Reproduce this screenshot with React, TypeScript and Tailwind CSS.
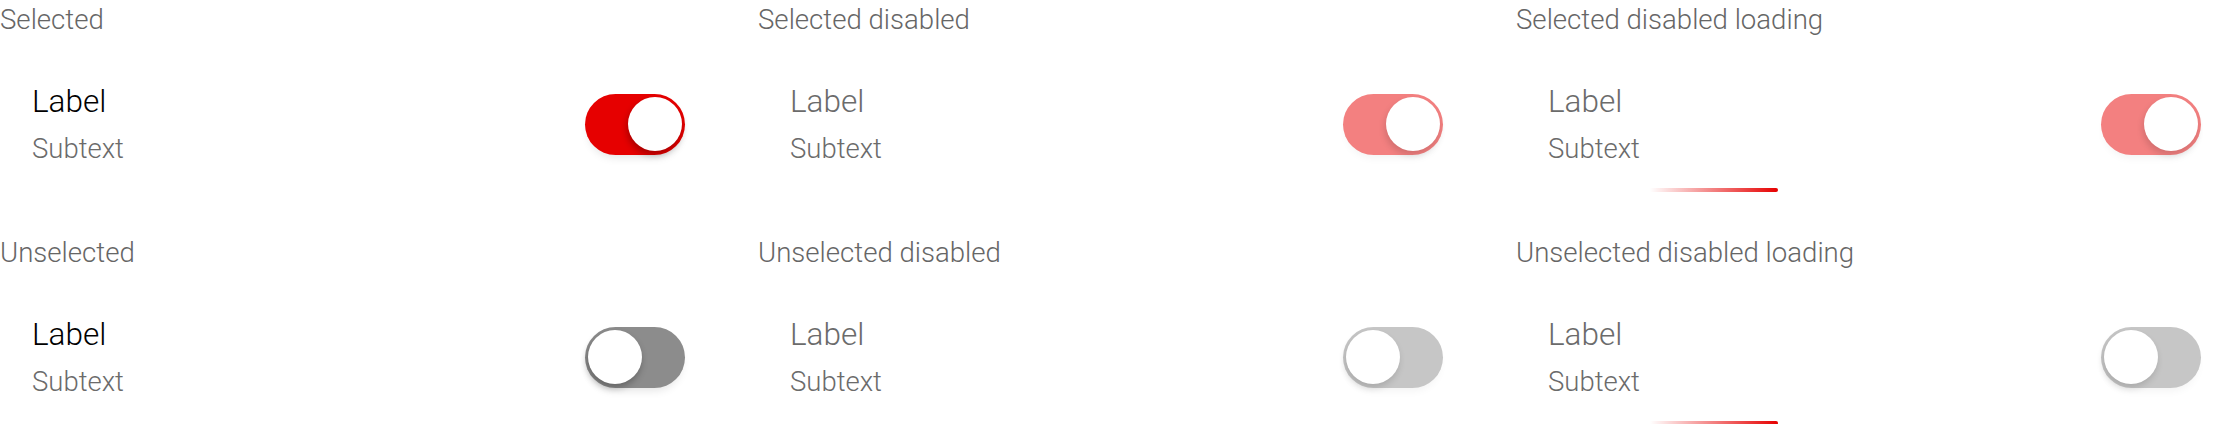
import React from 'react';

type ToggleProps = {
  selected: boolean;
  disabled?: boolean;
};

const Toggle: React.FC<ToggleProps> = ({ selected, disabled = false }) => {
  let track = 'bg-[#8c8c8c]';
  if (selected && !disabled) track = 'bg-[#e60000]';
  if (selected && disabled) track = 'bg-[#f38080]';
  if (!selected && disabled) track = 'bg-[#c6c6c6]';

  return (
    <div
      className={`flex items-center w-[100px] h-[61px] p-[3px] rounded-full shrink-0 ${track} ${
        selected ? 'justify-end' : 'justify-start'
      } ${disabled ? 'shadow-[0_6px_10px_-4px_rgba(0,0,0,0.06)]' : 'shadow-[0_6px_10px_-4px_rgba(0,0,0,0.12)]'}`}
    >
      <div
        className={`size-[54px] rounded-full bg-white ${
          disabled
            ? 'shadow-[-1px_4px_7px_rgba(0,0,0,0.14)]'
            : 'shadow-[-1px_4px_7px_rgba(0,0,0,0.28)]'
        }`}
      />
    </div>
  );
};

type Variant = {
  title: string;
  selected: boolean;
  disabled?: boolean;
  loading?: boolean;
};

const SwitchItem: React.FC<{ variant: Variant }> = ({ variant }) => {
  const { title, selected, disabled, loading } = variant;
  return (
    <div className="w-[717px] shrink-0 mb-[41px]">
      <div className="h-[40px] text-[27.6px] leading-[40px] text-[#666666] whitespace-nowrap">{title}</div>
      {/* row with label + switch */}
      <div className="h-[148px] pt-[20px] px-8 flex items-center justify-between">
        <div className="flex flex-col">
          <span className={`text-[31.5px] leading-[36px] ${disabled ? 'text-[#6b6b6b]' : 'text-black'}`}>Label</span>
          <span className="mt-[13px] text-[27.5px] leading-[32px] text-[#6b6b6b]">Subtext</span>
        </div>
        <Toggle selected={selected} disabled={disabled} />
      </div>
      {/* loading bar slot */}
      <div className="h-[4px]">
        {loading && (
          <div className="ml-[134px] w-[128px] h-[4px] rounded-r-full bg-linear-to-r from-[rgba(230,0,0,0)] to-[#e60000]" />
        )}
      </div>
    </div>
  );
};

const columns: Variant[][] = [
  [
    { title: 'Selected', selected: true },
    { title: 'Unselected', selected: false },
  ],
  [
    { title: 'Selected disabled', selected: true, disabled: true },
    { title: 'Unselected disabled', selected: false, disabled: true },
  ],
  [
    { title: 'Selected disabled loading', selected: true, disabled: true, loading: true },
    { title: 'Unselected disabled loading', selected: false, disabled: true, loading: true },
  ],
];

export default function App() {
  return (
    <div
      className="w-[2234px] h-[424px] overflow-hidden bg-white flex gap-[41px] font-light"
      style={{ fontFamily: 'Roboto, "Liberation Sans", sans-serif' }}
    >
      {columns.map((col, i) => (
        <div key={i} className="flex flex-col shrink-0">
          {col.map((v) => (
            <SwitchItem key={v.title} variant={v} />
          ))}
        </div>
      ))}
    </div>
  );
}
